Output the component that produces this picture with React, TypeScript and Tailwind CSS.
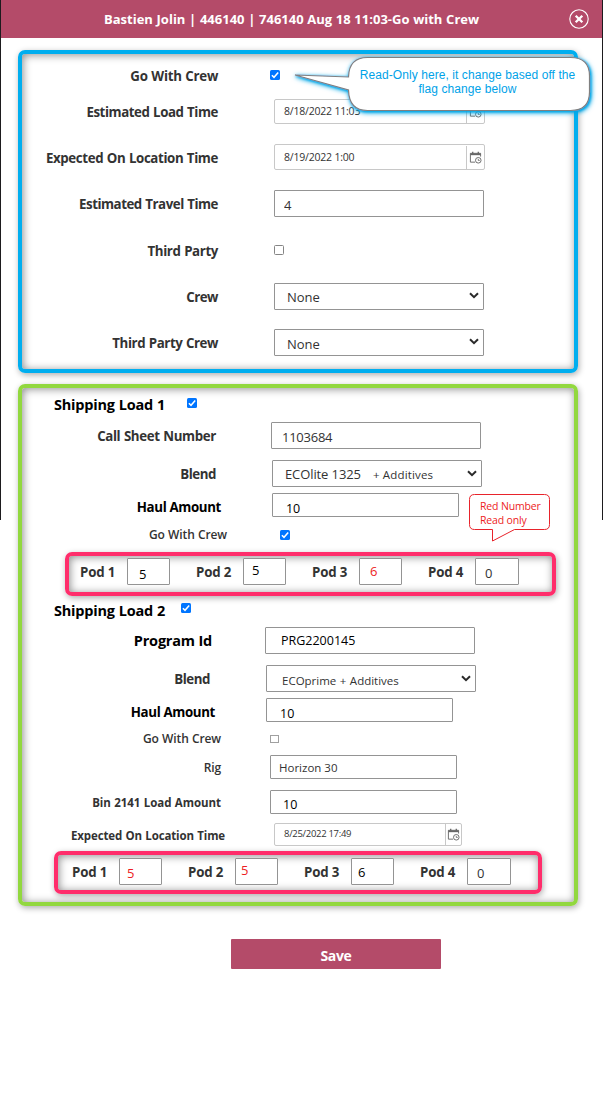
import React from "react";
import clsx from "clsx";

function Check({ on = false, className = "" }: { on?: boolean; className?: string }) {
  return (
    <span
      role="checkbox"
      aria-checked={on}
      className={clsx(
        "flex size-[10px] shrink-0 items-center justify-center rounded-[1.5px]",
        on ? "bg-[#0075ff]" : "border border-[#858585] bg-white",
        className
      )}
    >
      {on && (
        <svg viewBox="0 0 10 10" className="size-[10px]" fill="none" stroke="#fff" strokeWidth="1.5">
          <path d="M1.9 5.2 4 7.3 8.2 2.5" />
        </svg>
      )}
    </span>
  );
}

function Field({ value, className = "" }: { value: string; className?: string }) {
  return (
    <input
      defaultValue={value}
      className={clsx("shrink-0 rounded-[1px] border border-[#949494] bg-white outline-none", className)}
    />
  );
}

function SelectBox({ children, className = "" }: { children: React.ReactNode; className?: string }) {
  return (
    <div
      role="combobox"
      className={clsx(
        "flex h-[27px] w-[210px] shrink-0 items-center justify-between rounded-[1px] border border-[#949494] bg-white pr-[4px]",
        className
      )}
    >
      <span className="flex items-baseline whitespace-pre">{children}</span>
      <svg viewBox="0 0 10 7" className="mb-[1px] h-[7px] w-[10px]" fill="none" stroke="#2a2a2a" strokeWidth="2">
        <path d="M1 1.2 5 5.2 9 1.2" />
      </svg>
    </div>
  );
}

function CalendarClock() {
  return (
    <svg viewBox="0 0 14 14" className="size-[13px]" fill="none" stroke="#666" strokeWidth="1">
      <path d="M6.5 12H1.5V2.5H12.500V6" />
      <path d="M1.500 3.500H12.500" strokeWidth="2" />
      <path d="M4 .8V3M10 .8V3" strokeWidth="1.4" />
      <circle cx="10" cy="10" r="3" />
      <path d="M10 8.500V10.200H11.500" strokeWidth=".9" />
    </svg>
  );
}

function DateField({
  value,
  className = "",
  iconClass = "w-[18px]",
}: {
  value: string;
  className?: string;
  iconClass?: string;
}) {
  return (
    <div className={clsx("flex shrink-0 rounded-[2px] border border-[#c8c8c8] bg-white text-[#333]", className)}>
      <span className="flex flex-1 items-center pl-[9px]">{value}</span>
      <span className={clsx("flex items-center justify-center border-l border-[#c8c8c8]", iconClass)}>
        <CalendarClock />
      </span>
    </div>
  );
}

function Row({
  label,
  labelClass,
  className,
  children,
}: {
  label: string;
  labelClass: string;
  className: string;
  children: React.ReactNode;
}) {
  return (
    <div className={clsx("flex items-center", className)}>
      <label className={clsx("shrink-0 text-right whitespace-nowrap", labelClass)}>{label}</label>
      {children}
    </div>
  );
}

function Pod({ n, value, className = "" }: { n: number; value: string; className?: string }) {
  return (
    <div className="flex w-[116px] shrink-0 items-center">
      <label className="w-[47px] pt-[2px] text-[13.3px] font-bold tracking-[-0.2px] text-[#333]">Pod {n}</label>
      <Field value={value} className={clsx("h-[27px] text-[13px]", n === 4 ? "w-[44px]" : "w-[43px]", className)} />
    </div>
  );
}

const PANEL =
  "rounded-[7px] border-4 shadow-[1px_2px_6px_rgba(0,0,0,0.32),inset_1px_1px_9px_rgba(0,0,0,0.45)]";
const BOLD = "pt-[3px] text-[13.3px] font-bold [word-spacing:0.5px] text-[#333]";
const MAIN = "w-[196px] tracking-[-0.38px]";
const SUB = "text-[12px] font-semibold tracking-[-0.1px] [word-spacing:0.2px] text-[#333]";

export default function App() {
  return (
    <div className="relative min-h-[1118px] w-[603px] overflow-hidden bg-white font-['Open_Sans','Noto_Sans',sans-serif]">
      <header className="flex h-[38px] items-center justify-between bg-[#b44b69] pr-[14px] pl-[104px]">
        <h1 className="pt-[2px] text-[13px] font-bold [word-spacing:0.3px] whitespace-nowrap text-white">
          Bastien Jolin | 446140 | 746140 Aug 18 11:03-Go with Crew
        </h1>
        <svg viewBox="0 0 20 20" className="size-[20px]" fill="none" stroke="#fff">
          <circle cx="10" cy="10" r="9.200" strokeWidth="1.1" />
          <path d="M6.700 6.700 13.300 13.300M13.300 6.700 6.700 13.300" strokeWidth="2.300" />
        </svg>
      </header>
      <div className="absolute top-0 left-0 h-[520px] w-px bg-[#1d1b1e]" />
      <div className="absolute top-0 right-0 h-[520px] w-px bg-[#1d1b1e]" />

      <section className={clsx("mt-[12px] ml-[18px] h-[323px] w-[560px] border-[#00aeef] pt-[8px]", PANEL)}>
        <Row label="Go With Crew" className="h-[26px]" labelClass={clsx("w-[196px] tracking-[-0.27px]", BOLD)}>
          <Check on className="ml-[52px]" />
        </Row>
        <Row label="Estimated Load Time" className="h-[46px]" labelClass={clsx("w-[196px] tracking-[-0.43px]", BOLD)}>
          <DateField value="8/18/2022 11:03" className="ml-[56px] h-[25px] w-[211px] pt-[1px] text-[10.5px] tracking-[-0.2px]" />
        </Row>
        <Row label="Expected On Location Time" className="h-[46px]" labelClass={clsx(MAIN, BOLD)}>
          <DateField value="8/19/2022 1:00" className="ml-[56px] h-[26px] w-[211px] pt-[1px] text-[10.5px] tracking-[-0.2px]" />
        </Row>
        <Row label="Estimated Travel Time" className="h-[47px]" labelClass={clsx("w-[196px] tracking-[-0.47px]", BOLD)}>
          <Field value="4" className="ml-[56px] h-[27px] w-[210px] pt-[2px] pl-[9px] text-[13px] text-[#333]" />
        </Row>
        <Row label="Third Party" className="h-[46px]" labelClass={clsx(MAIN, BOLD)}>
          <Check className="ml-[56px]" />
        </Row>
        <Row label="Crew" className="h-[46px]" labelClass={clsx("w-[196px] tracking-[-0.5px]", BOLD)}>
          <SelectBox className="ml-[56px] pl-[12px] text-[13px] text-[#333]">
            <span className="pt-[4px]">None</span>
          </SelectBox>
        </Row>
        <Row label="Third Party Crew" className="h-[46px]" labelClass={clsx("w-[196px] tracking-[-0.42px]", BOLD)}>
          <SelectBox className="ml-[56px] pl-[12px] text-[13px] text-[#333]">
            <span className="pt-[5px]">None</span>
          </SelectBox>
        </Row>
      </section>

      <section className={clsx("mt-[11px] ml-[18px] h-[522px] w-[560px] border-[#92d83f]", PANEL)}>
        <div className="flex h-[30px] items-center pl-[32px]">
          <h2 className="w-[133px] pt-[4px] text-[14.500px] font-bold tracking-[-0.22px] [word-spacing:0.5px] text-black">
            Shipping Load 1
          </h2>
          <Check on />
        </div>
        <Row
          label="Call Sheet Number"
          className="mt-[4px] h-[27px]"
          labelClass={clsx("w-[194px] tracking-[-0.36px]", BOLD)}
        >
          <Field
            value="1103684"
            className="ml-[55px] h-[27px] w-[210px] pt-[2px] pl-[10px] text-[13px] tracking-[-0.25px] text-[#333]"
          />
        </Row>
        <Row label="Blend" className="mt-[11px] h-[27px]" labelClass={clsx("w-[194px] tracking-[-0.45px]", BOLD)}>
          <SelectBox className="ml-[56px] pl-[12px] text-[13px] text-[#333]">
            <span className="w-[88px] pt-[3px] tracking-[-0.1px]">ECOlite 1325</span>
            <span className="text-[11.500px] tracking-[0.15px]">+ Additives</span>
          </SelectBox>
        </Row>
        <Row
          label="Haul Amount"
          className="mt-[6px] h-[24px]"
          labelClass="w-[199px] pt-[5px] text-[13.3px] font-bold tracking-[-0.36px] text-black"
        >
          <Field
            value="10"
            className="ml-[51px] h-[24px] w-[187px] pt-[6px] pl-[13px] text-[12.500px] tracking-[-0.2px] text-black"
          />
        </Row>
        <Row label="Go With Crew" className="mt-[7px] h-[22px]" labelClass={clsx("w-[205px]", SUB)}>
          <Check on className="ml-[53px]" />
        </Row>

        <div className={clsx("mt-[6px] ml-[43px] flex h-[44px] w-[491px] items-start border-[#ff2d6b] pt-[2px] pl-[11px]", PANEL)}>
          <Pod n={1} value="5" className="pt-[4px] pl-[11px] text-black" />
          <Pod n={2} value="5" className="pb-[3px] pl-[8px] text-black" />
          <Pod n={3} value="6" className="pb-[1px] pl-[10px] text-[#ed1c24]" />
          <Pod n={4} value="0" className="pt-[3px] pl-[9px] text-[#333]" />
        </div>

        <div className="flex h-[24px] items-center pl-[32px]">
          <h2 className="w-[127px] pt-[5px] text-[14.500px] font-bold tracking-[-0.22px] [word-spacing:0.5px] text-black">
            Shipping Load 2
          </h2>
          <Check on />
        </div>
        <Row
          label="Program Id"
          className="mt-[7px] h-[27px]"
          labelClass="w-[190px] pt-[1px] text-[14.500px] font-bold tracking-[-0.2px] text-black"
        >
          <Field value="PRG2200145" className="ml-[53px] h-[27px] w-[210px] pl-[15px] text-[12.500px] text-black" />
        </Row>
        <Row label="Blend" className="mt-[11px] h-[27px]" labelClass={clsx("w-[188px] tracking-[-0.45px]", BOLD)}>
          <SelectBox className="ml-[56px] pl-[15px] text-[11.500px] text-[#333]">
            <span className="pt-[4px] [word-spacing:0.5px]">ECOprime + Additives</span>
          </SelectBox>
        </Row>
        <Row
          label="Haul Amount"
          className="mt-[6px] h-[24px]"
          labelClass="w-[193px] pt-[5px] text-[13.3px] font-bold tracking-[-0.36px] text-black"
        >
          <Field
            value="10"
            className="ml-[51px] h-[24px] w-[187px] pt-[6px] pl-[13px] text-[12.500px] text-black"
          />
        </Row>
        <Row label="Go With Crew" className="mt-[6px] h-[22px]" labelClass={clsx("w-[199px]", SUB)}>
          <Check className="ml-[49px] h-[8px] w-[9px] rounded-none border-[#a0a0a0]" />
        </Row>
        <Row label="Rig" className="mt-[5px] h-[24px]" labelClass={clsx("w-[199px] pt-[2px]", SUB)}>
          <Field
            value="Horizon 30"
            className="ml-[49px] h-[24px] w-[187px] pt-[1px] pl-[8px] text-[11.500px] text-[#333]"
          />
        </Row>
        <Row
          label="Bin 2141 Load Amount"
          className="mt-[11px] h-[24px]"
          labelClass="w-[199px] pt-[2px] text-[11.500px] font-bold tracking-[-0.05px] [word-spacing:0.5px] text-[#333]"
        >
          <Field value="10" className="ml-[49px] h-[24px] w-[187px] pt-[4px] pl-[12px] text-[12.500px] text-black" />
        </Row>
        <Row
          label="Expected On Location Time"
          className="mt-[9px] h-[23px]"
          labelClass="w-[203px] pt-[3px] text-[11.500px] font-bold tracking-[-0.13px] [word-spacing:0.5px] text-[#333]"
        >
          <DateField
            value="8/25/2022 17:49"
            iconClass="w-[16px]"
            className="ml-[49px] h-[23px] w-[188px] text-[9.500px] tracking-[-0.3px]"
          />
        </Row>

        <div className={clsx("mt-[5px] ml-[32px] flex h-[43px] w-[488px] items-start border-[#ff2d6b] pt-[3px] pl-[14px]", PANEL)}>
          <Pod n={1} value="5" className="pt-[2px] pl-[7px] text-[#ed1c24]" />
          <Pod n={2} value="5" className="pb-[4px] pl-[5px] text-[#ed1c24]" />
          <Pod n={3} value="6" className="pt-[1px] pl-[6px] text-black" />
          <Pod n={4} value="0" className="pt-[3px] pl-[9px] text-[#333]" />
        </div>
      </section>

      <button className="mt-[33px] ml-[231px] flex h-[30px] w-[210px] items-center justify-center rounded-[1px] bg-[#b44b69] pt-[3px] text-[14px] font-bold tracking-[-0.3px] text-white">
        Save
      </button>

      <div className="absolute top-[47px] left-[283px] h-[76px] w-[320px]">
        <svg viewBox="283 47 320 76" className="h-[76px] w-[320px]">
          <defs>
            <filter id="glow" x="-10%" y="-30%" width="120%" height="160%">
              <feDropShadow dx="1" dy="1" stdDeviation="1.300" floodColor="#00a6e6" floodOpacity="1" />
              <feDropShadow dx="0.500" dy="1" stdDeviation="2" floodColor="#00a6e6" floodOpacity="1" />
            </filter>
          </defs>
          <path
            filter="url(#glow)"
            d="M367.500 57.500H570.500Q589.500 57.500 589.500 76V92Q589.500 110.500 570.500 110.500H367.500Q349 110.500 348.500 90L295 75 348.500 77Q349 57.500 367.500 57.500Z"
            fill="#fff"
            stroke="#808080"
            strokeWidth="1.200"
          />
        </svg>
        <p className="absolute top-[21px] left-[64px] w-[241px] text-center font-['Liberation_Sans',Arial,sans-serif] text-[12px] leading-[14px] tracking-[0.08px] text-[#00a2e8]">
          Read-Only here, it change based off the
          <br />
          flag change below
        </p>
      </div>

      <div className="absolute top-[494px] left-[469px] h-[48px] w-[82px]">
        <svg viewBox="0 0 82 48" className="h-[48px] w-[82px]" fill="#fff" stroke="#e8232b" strokeWidth="1">
          <path d="M5.500 .5H75.500Q80.500 .5 80.500 5.500V30.500Q80.500 35.500 75.500 35.500H45.500L23.500 47V35.500H5.500Q.5 35.500 .5 30.500V5.500Q.5 .5 5.500 .5Z" />
        </svg>
        <p className="absolute top-[5px] left-[11px] text-[10.500px] leading-[14px] tracking-[-0.15px] whitespace-nowrap text-[#ed1c24]">
          Red Number
          <br />
          Read only
        </p>
      </div>
    </div>
  );
}
